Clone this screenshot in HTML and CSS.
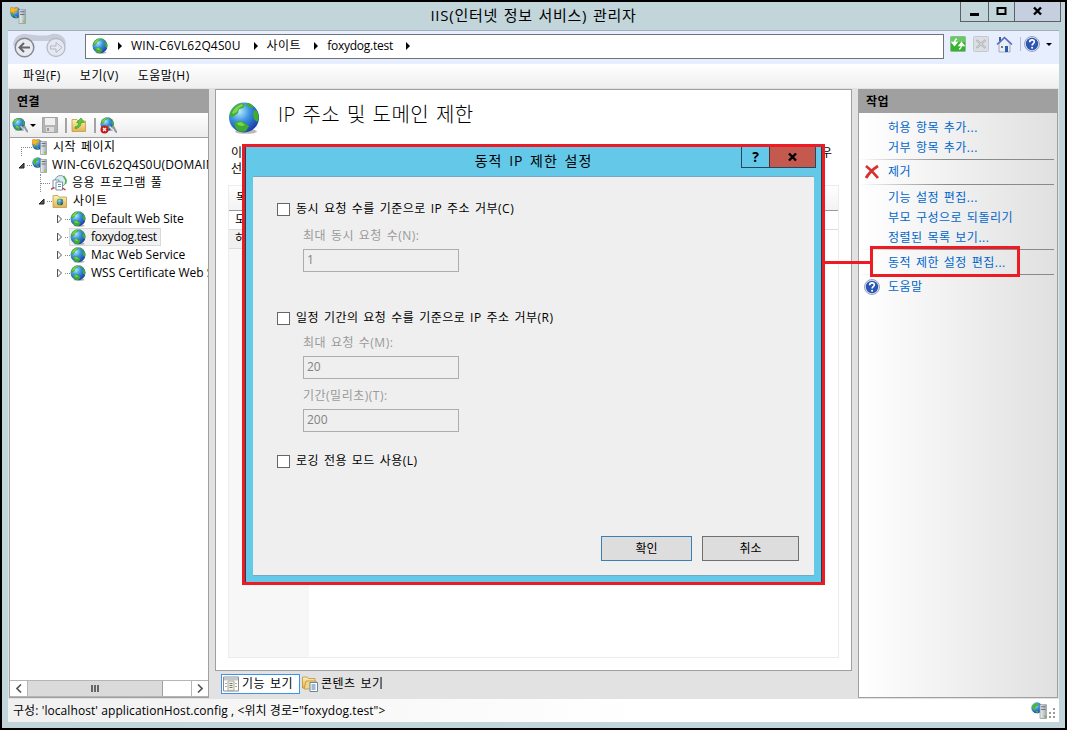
FILE: index.html
```html
<!DOCTYPE html>
<html lang="ko">

<head>
    <meta charset="UTF-8">
    <meta name="viewport" content="width=device-width, initial-scale=1.0">
    <title>IIS(인터넷 정보 서비스) 관리자</title>
    <link rel="stylesheet" href="styles.css">
</head>

<body>
    <!-- Shared icons -->
    <svg class="defs" width="0" height="0">
        <defs>
            <radialGradient id="sea" cx="35%" cy="30%" r="75%">
                <stop offset="0" stop-color="#b5ecfd" />
                <stop offset=".45" stop-color="#3c93e0" />
                <stop offset="1" stop-color="#1a3aa4" />
            </radialGradient>
            <linearGradient id="steel" x1="0" x2="1">
                <stop offset="0" stop-color="#eef2f4" />
                <stop offset="1" stop-color="#a3adb3" />
            </linearGradient>
            <linearGradient id="gold" x1="0" y1="0" x2="0" y2="1">
                <stop offset="0" stop-color="#fdf0b4" />
                <stop offset="1" stop-color="#e2b450" />
            </linearGradient>
            <symbol id="globe" viewBox="0 0 32 32">
                <ellipse cx="18" cy="29.5" rx="11" ry="2.3" fill="#000" opacity=".28" />
                <circle cx="16" cy="15.5" r="15" fill="url(#sea)" />
                <path d="M2 12C4 5 9 2 14 1l3 2-2 3-4 1-1 4-4 3-3 2zM19 1c3 0 5 2 7 4l-3 1-4-2zM26 8l3 1c2 4 2 8 0 11l-3-3-1-5zM7 20l6-1 5 3 3 2-3 5c-4 2-9 0-11-4z" fill="#3fae2f" />
                <path d="M4 11C6 6 10 3 14 2l1 2-4 2-2 4-4 2zM9 21l4-1 4 3-3 1-4-1z" fill="#93dc55" opacity=".8" />
            </symbol>
            <symbol id="server" viewBox="0 0 16 16">
                <circle cx="5.5" cy="5.5" r="5.200" fill="url(#sea)" />
                <path d="M1 4c1-2 3-3 5-3l1 2-3 2v2L2 8zM4 8l3 1-1 2z" fill="#4cb832" />
                <path d="M8.500 2.500h6v13h-6z" fill="url(#steel)" stroke="#8b969c" stroke-width=".7" />
                <path d="M9.500 4.500h4M9.500 7h4" stroke="#505b61" stroke-width=".8" />
                <circle cx="13" cy="13.500" r="1" fill="#83d412" />
            </symbol>
            <symbol id="iis" viewBox="0 0 16 16">
                <use href="#server" />
                <path d="M0 1l2.500-1L4 1.500 7.500.5 7 3.500 4.500 4 4 6.500 2 5 .5 5.500z" fill="#fbb52a" stroke="#d08207" stroke-width=".5" />
            </symbol>
            <symbol id="folder" viewBox="0 0 16 16">
                <path d="M1 2.500h5l1 1.500h7.500v10.500H1z" fill="url(#gold)" stroke="#c29a45" stroke-width=".8" />
            </symbol>
            <symbol id="help" viewBox="0 0 16 16">
                <circle cx="8" cy="8" r="7.500" fill="#dfe5f2" stroke="#8390ae" stroke-width=".8" />
                <circle cx="8" cy="8" r="6.200" fill="#2b56b4" />
                <path d="M5.700 6.300C5.700 3.100 10.500 3.200 10.300 6c-.1 1.600-2.200 1.700-2.200 3.500" fill="none" stroke="#fff" stroke-width="1.700" />
                <circle cx="8.100" cy="11.800" r="1.050" fill="#fff" />
            </symbol>
            <symbol id="connect" viewBox="0 0 16 16">
                <use href="#globe" width="13.500" height="13.500" />
                <path d="M8.500 8.500l3 3M9.500 11.500l3-2.500 2 4 1.500 1.500" fill="none" stroke="#8f9ba2" stroke-width="2" />
                <path d="M9 9l3 3" stroke="#e8eef0" stroke-width="1" />
            </symbol>
        </defs>
    </svg>

    <div class="window">
        <header class="titlebar">
            <svg class="app-icon" width="17" height="17"><use href="#iis" /></svg>
            <h1 class="window-title">IIS(인터넷 정보 서비스) 관리자</h1>
            <div class="window-buttons">
                <span class="win-btn min"><svg width="11" height="11"><path d="M1 7h9v3H1z" /></svg></span>
                <span class="win-btn"><svg width="11" height="11"><path d="M1.500 2h8v6h-8z" fill="none" stroke="#000" stroke-width="2" /></svg></span>
                <span class="win-btn wide"><svg width="11" height="11"><path d="M2 1.500l7 7M9 1.500l-7 7" stroke="#000" stroke-width="2.400" /></svg></span>
            </div>
        </header>

        <div class="client">
            <div class="address-row">
                <svg class="nav-arrows" width="56" height="31" viewBox="0 0 56 31">
                    <path d="M1 14C2 4 7 2 14 2c7 1 20 3 26 0 8-1 14 3 14 11L48 9H10z" fill="#b9bdc8" opacity=".7" />
                    <circle cx="12.500" cy="15.500" r="9.300" fill="#e9ebf0" stroke="#858890" stroke-width="1.500" />
                    <path d="M18 15.500H8M12 11l-4.500 4.500L12 20" fill="none" stroke="#63666d" stroke-width="2" />
                    <circle cx="44" cy="15.500" r="9" fill="#e3e8f2" stroke="#b6bac4" stroke-width="1.300" />
                    <path d="M38.500 14H44v-3.500l6 5-6 5V17h-5.500z" fill="none" stroke="#b3b8c2" stroke-width="1" />
                </svg>
                <div class="address">
                    <svg width="16" height="16"><use href="#globe" /></svg>
                    <i class="crumb-arrow first"></i>
                    <span class="crumb host">WIN-C6VL62Q4S0U</span>
                    <i class="crumb-arrow"></i>
                    <span class="crumb ko">사이트</span>
                    <i class="crumb-arrow"></i>
                    <span class="crumb foxy">foxydog.test</span>
                    <i class="crumb-arrow"></i>
                </div>
                <div class="address-tools">
                    <svg width="16" height="16" viewBox="0 0 16 16">
                        <rect x=".5" y=".5" width="15" height="15" rx="1" fill="#35b52f" stroke="#8fba8b" />
                        <path d="M1 1h14v5H1z" fill="#8bd985" opacity=".6" />
                        <path d="M7 3C5 3.200 4.500 4.500 4.500 8M2 6.500h5L4.500 9.500zM9 13c2-.2 2.500-1.500 2.500-5M9 9.500h5L11.500 6.500z" fill="none" stroke="#fff" stroke-width="1.300" />
                    </svg>
                    <svg width="16" height="16" viewBox="0 0 16 16">
                        <rect x=".5" y=".5" width="15" height="15" rx="1" fill="#dcdee2" stroke="#c5c8cd" />
                        <path d="M3.500 4l9 8M12.500 4l-9 8" stroke="#a9acb1" stroke-width="2" />
                        <path d="M3.500 4l9 8M12.500 4l-9 8" stroke="#e8e9eb" stroke-width=".7" />
                    </svg>
                    <svg width="17" height="17" viewBox="0 0 17 17">
                        <path d="M3 8l5.500-6L14 8v8H3z" fill="#e9edf5" stroke="#8e9cb5" stroke-width=".8" />
                        <path d="M3 1h2v4H3z" fill="#4454a8" />
                        <path d="M1 8.500l7.500-7L16 8.500" fill="none" stroke="#5468c4" stroke-width="1.600" />
                        <path d="M9 10h3v6H9z" fill="#2a5da8" />
                        <path d="M5 10h2v2H5z" fill="#777" />
                    </svg>
                    <i class="tool-sep"></i>
                    <svg width="16" height="16"><use href="#help" /></svg>
                    <i class="drop"></i>
                </div>
            </div>

            <nav class="menubar">
                <span>파일(F)</span>
                <span>보기(V)</span>
                <span>도움말(H)</span>
            </nav>

            <main class="panes">
                <section class="pane connections">
                    <h2 class="pane-title">연결</h2>
                    <div class="toolbar">
                        <svg width="16" height="17"><use href="#connect" /></svg>
                        <i class="drop"></i>
                        <svg class="save" width="16" height="16" viewBox="0 0 16 16">
                            <path d="M.5.5h15v15h-15z" fill="#b4b4b4" stroke="#a4a4a4" />
                            <path d="M3 1h10v7H3z" fill="#efefef" />
                            <path d="M4 10h8v5H4z" fill="#dcdcdc" />
                            <path d="M5 11h2v3H5z" fill="#999" />
                        </svg>
                        <i class="bar-sep"></i>
                        <svg width="16" height="16" viewBox="0 0 16 16">
                            <use href="#folder" />
                            <path d="M4 10c2.500-.5 3.500-2 3.500-4.500H5.500L10 1l3.500 4.500H10c0 4-3 6-6 6z" fill="#5cc83c" stroke="#2d9420" stroke-width=".6" />
                        </svg>
                        <i class="bar-sep"></i>
                        <svg width="17" height="17" viewBox="0 0 17 17">
                            <use href="#connect" width="17" height="17" />
                            <circle cx="4.500" cy="12.500" r="4" fill="#c91a1a" />
                            <path d="M3 11l3 3M6 11l-3 3" stroke="#fff" stroke-width="1.200" />
                        </svg>
                    </div>
                    <ul class="tree">
                        <li class="node start"><i class="dots"></i><svg width="16" height="16"><use href="#iis" /></svg><span class="ko">시작 페이지</span></li>
                        <li class="node root"><svg class="twist" width="7" height="7"><path d="M6 1v5H1z" fill="#555" stroke="#222" /></svg><i class="dots"></i><svg width="16" height="16"><use href="#server" /></svg><span class="host">WIN-C6VL62Q4S0U(DOMAIN</span></li>
                        <li class="node pools"><i class="dots"></i><svg width="16" height="16" viewBox="0 0 16 16">
                                <circle cx="9.500" cy="6" r="5.500" fill="#d8ebf5" stroke="#6fa0bd" />
                                <path d="M12.500 1l2.500 4-.5 4" fill="none" stroke="#58b04a" stroke-width="1.600" />
                                <path d="M2 5h6v8H2z" fill="#fff" stroke="#7b94a5" />
                                <path d="M5 7h6.500v8H5z" fill="#fff" stroke="#7b94a5" />
                                <path d="M7 9.500h3M7 11.500h3" stroke="#7b94a5" />
                                <path d="M0 14.500l3-2M14.500 15l-3-2" stroke="#cf3030" stroke-width="1.500" />
                            </svg><span class="ko">응용 프로그램 풀</span></li>
                        <li class="node sites"><svg class="twist" width="7" height="7"><path d="M6 1v5H1z" fill="#555" stroke="#222" /></svg><i class="dots"></i><svg width="16" height="16" viewBox="0 0 16 16"><use href="#folder" /><use href="#globe" x="4.500" y="5.500" width="7" height="7" /></svg><span class="ko">사이트</span></li>
                        <li class="node site"><svg class="twist" width="7" height="10"><path d="M1.500 1v8l4-4z" fill="#fff" stroke="#555" /></svg><i class="dots"></i><svg width="16" height="16"><use href="#globe" /></svg><span>Default Web Site</span></li>
                        <li class="node site"><svg class="twist" width="7" height="10"><path d="M1.500 1v8l4-4z" fill="#fff" stroke="#555" /></svg><i class="dots"></i><div class="selected"><svg width="16" height="16"><use href="#globe" /></svg><span class="foxy">foxydog.test</span></div></li>
                        <li class="node site"><svg class="twist" width="7" height="10"><path d="M1.500 1v8l4-4z" fill="#fff" stroke="#555" /></svg><i class="dots"></i><svg width="16" height="16"><use href="#globe" /></svg><span>Mac Web Service</span></li>
                        <li class="node site"><svg class="twist" width="7" height="10"><path d="M1.500 1v8l4-4z" fill="#fff" stroke="#555" /></svg><i class="dots"></i><svg width="16" height="16"><use href="#globe" /></svg><span>WSS Certificate Web S</span></li>
                    </ul>
                    <div class="scrollbar">
                        <span class="scroll-btn"><svg width="6" height="9"><path d="M5 .5l-4 4 4 4" fill="none" stroke="#555" stroke-width="1.600" /></svg></span>
                        <span class="thumb"><i></i><i></i><i></i></span>
                        <span class="scroll-btn end"><svg width="6" height="9"><path d="M1 .5l4 4-4 4" fill="none" stroke="#555" stroke-width="1.600" /></svg></span>
                    </div>
                </section>

                <section class="center">
                    <div class="feature">
                        <div class="feature-head">
                            <svg width="32" height="32"><use href="#globe" /></svg>
                            <h2>IP 주소 및 도메인 제한</h2>
                        </div>
                        <div class="feature-text">
                            <p><span>이</span><span>우</span></p>
                            <p><span>선</span></p>
                        </div>
                        <div class="grid">
                            <div class="grid-head">목</div>
                            <div class="grid-group">모</div>
                            <div class="grid-row">허</div>
                            <div class="grid-fill"></div>
                        </div>
                    </div>
                    <div class="view-tabs ko">
                        <span class="tab active">
                            <svg width="16" height="16" viewBox="0 0 16 16">
                                <path d="M.5 1h15v14H.5z" fill="#fff" stroke="#8a8a8a" />
                                <path d="M1 1.500h14v3H1z" fill="#c3c7ca" />
                                <path d="M5 5h6v9.500H5z" fill="#f4f1dc" stroke="#aaa" />
                                <path d="M2 7.500h2M2 10.500h2M12 7.500h2M12 10.500h2" stroke="#aaa" />
                                <path d="M6.500 7.500h3M6.500 9.500h3M6.500 11.500h3" stroke="#6f7c72" />
                            </svg>
                            기능 보기
                        </span>
                        <span class="tab">
                            <svg width="16" height="16" viewBox="0 0 16 16">
                                <path d="M.5 1h5l1 1.500H13V12H.5z" fill="url(#gold)" stroke="#b99244" stroke-width=".8" />
                                <path d="M4 5h10v8H2z" fill="#f3d482" stroke="#b99244" stroke-width=".8" />
                                <path d="M8 6.500h7.500v9H8z" fill="#fff" stroke="#6c8399" />
                                <path d="M9.500 9h4M9.500 11h4M9.500 13h4" stroke="#456fa5" />
                            </svg>
                            콘텐츠 보기
                        </span>
                    </div>
                </section>

                <section class="pane actions">
                    <h2 class="pane-title">작업</h2>
                    <ul class="action-list ko">
                        <li>허용 항목 추가...</li>
                        <li>거부 항목 추가...</li>
                        <li class="rule"></li>
                        <li class="with-icon"><svg width="16" height="16" viewBox="0 0 16 16"><path d="M2 2c4 3 8 7 12 12M14 2C9 5 5 9 2 14" fill="none" stroke="#d8302f" stroke-width="2.800" /></svg>제거</li>
                        <li class="rule"></li>
                        <li>기능 설정 편집...</li>
                        <li>부모 구성으로 되돌리기</li>
                        <li>정렬된 목록 보기...</li>
                        <li class="rule"></li>
                        <li>동적 제한 설정 편집...</li>
                        <li class="rule"></li>
                        <li class="with-icon"><svg width="16" height="16"><use href="#help" /></svg>도움말</li>
                    </ul>
                </section>
            </main>

            <footer class="statusbar">
                <span>구성: 'localhost' applicationHost.config , &lt;위치 경로="foxydog.test"&gt;</span>
                <svg width="28" height="18" viewBox="0 0 28 18">
                    <use href="#server" x="1" width="17" height="17" />
                    <path d="M23 6h2v2h-2zM19 10h2v2h-2zM23 10h2v2h-2zM15 14h2v2h-2zM19 14h2v2h-2zM23 14h2v2h-2z" fill="#9a9a9a" />
                </svg>
            </footer>
        </div>
    </div>

    <!-- Dialog on top of the manager window -->
    <div class="dialog">
        <div class="dialog-bar">
            <h2>동적 IP 제한 설정</h2>
            <div class="dialog-buttons">
                <span class="dlg-help">?</span>
                <span class="dlg-close"><svg width="11" height="11"><path d="M2 1.500l7 7M9 1.500l-7 7" stroke="#000" stroke-width="2.400" /></svg></span>
            </div>
        </div>
        <form class="dialog-body ko">
            <label class="check"><input type="checkbox"><span>동시 요청 수를 기준으로 IP 주소 거부(C)</span></label>
            <label class="field concurrent">최대 동시 요청 수(N):<input type="text" value="1" disabled></label>
            <label class="check"><input type="checkbox"><span>일정 기간의 요청 수를 기준으로 IP 주소 거부(R)</span></label>
            <label class="field requests">최대 요청 수(M):<input type="text" value="20" disabled></label>
            <label class="field period">기간(밀리초)(T):<input type="text" value="200" disabled></label>
            <label class="check"><input type="checkbox"><span>로깅 전용 모드 사용(L)</span></label>
            <div class="dialog-actions">
                <button type="button" class="ok">확인</button>
                <button type="button" class="cancel">취소</button>
            </div>
        </form>
    </div>
    <div class="callout-line"></div>
    <div class="callout"></div>
</body>

</html>
```
FILE: styles.css
```css
* {
    box-sizing: border-box;
}

body {
    margin: 0;
    width: 1067px;
    height: 730px;
    overflow: hidden;
    font-family: "Open Sans", "Noto Sans CJK KR", sans-serif;
    font-size: 12px;
    line-height: 18px;
    color: #000;
    position: relative;
}

h1,
h2,
p,
ul {
    margin: 0;
    padding: 0;
    font-weight: normal;
    list-style: none;
}

svg {
    display: block;
    flex: none;
}

.defs {
    position: absolute;
}

/* Korean labels are set a little wider */
.ko {
    letter-spacing: 0.5px;
    word-spacing: 1.2px;
}

.host {
    letter-spacing: 0.15px;
}

.foxy {
    letter-spacing: -0.25px;
}

.window {
    display: flex;
    flex-direction: column;
    width: 1067px;
    height: 730px;
    border: 2px solid #000;
    padding: 0 6px 6px;
    background: #c2d5db;
}

/* Title bar */
.titlebar {
    display: flex;
    height: 28px;
    flex: none;
}

.app-icon {
    margin: 5px 0 0 2px;
}

.window-title {
    flex: 1;
    padding-left: 80px;
    text-align: center;
    font-size: 15px;
    line-height: 27px;
    letter-spacing: 0.75px;
    word-spacing: 1px;
}

.window-buttons {
    display: flex;
    height: 20px;
    margin-right: -2px;
    border: 1px solid #596067;
    border-top: 0;
}

.win-btn {
    display: flex;
    justify-content: center;
    align-items: center;
    width: 26px;
    border-right: 1px solid #596067;
}

.win-btn.min {
    width: 28px;
}

.win-btn.wide {
    width: 45px;
    border-right: 0;
    background: #c5cfdf;
}

.client {
    display: flex;
    flex-direction: column;
    flex: 1;
    min-height: 0;
    background: #e2e2e2;
}

/* Address */
.address-row {
    display: flex;
    height: 34px;
    flex: none;
    border-top: 1px solid #a2adb9;
    background: #e7eefd;
}

.nav-arrows {
    margin: 1px 0 0 4px;
}

.address {
    display: flex;
    align-items: center;
    width: 859px;
    height: 25px;
    margin: 3px 0 0 17px;
    padding: 0 0 2px 6px;
    border: 1px solid #6f737a;
    background: #fff;
}

.crumb {
    margin-right: 13px;
    white-space: nowrap;
}

.crumb-arrow {
    width: 0;
    height: 0;
    margin-right: 9px;
    border: 4px solid transparent;
    border-left: 4px solid #000;
    border-right: 0;
}

.crumb-arrow.first {
    margin-left: 10px;
}

.address-tools {
    display: flex;
    align-items: center;
    gap: 7px;
    height: 26px;
    padding-left: 6px;
}

.tool-sep {
    width: 1px;
    height: 14px;
    margin-right: -4px;
    background: #b8bfcc;
}

.drop {
    width: 0;
    height: 0;
    border: 3px solid transparent;
    border-top-color: #000;
    border-bottom: 0;
}

.address-tools .drop {
    margin-left: -1px;
}

/* Menu */
.menubar {
    display: flex;
    height: 24px;
    flex: none;
    gap: 19px;
    padding: 3px 0 0 15px;
    background: linear-gradient(#fff, #efefef);
    letter-spacing: 0.5px;
}

.panes {
    display: flex;
    flex: 1;
    min-height: 0;
    padding: 1px;
}

.pane {
    display: flex;
    flex-direction: column;
    width: 200px;
    height: 609px;
    border: 1px solid #a0a0a0;
    background: #fff;
}

.pane-title {
    flex: none;
    height: 23px;
    padding-left: 7px;
    background: #a0a0a0;
    font-size: 12px;
    line-height: 23px;
    font-weight: bold;
    letter-spacing: 0.5px;
}

.toolbar {
    display: flex;
    align-items: center;
    flex: none;
    height: 25px;
    padding-left: 2px;
    border-bottom: 1px solid #a0a0a0;
    background: linear-gradient(#fff, #ececec);
}

.toolbar .drop {
    margin-left: 2px;
}

.save {
    margin-left: 6px;
}

.bar-sep {
    width: 2px;
    height: 15px;
    margin: 0 4px 0 7px;
    background: #a4a4a4;
}

/* Tree */
.tree {
    flex: 1;
    overflow: hidden;
}

.node {
    display: flex;
    align-items: center;
    height: 18px;
    white-space: nowrap;
}

.node span {
    margin-left: 5px;
}

.dots {
    flex: none;
    height: 1px;
    width: 5px;
    border-top: 1px dotted #888;
}

.twist {
    margin-right: 2px;
}

.start {
    padding-left: 11px;
}

.start .dots {
    width: 11px;
    height: 9px;
    margin-top: 8px;
    border-left: 1px dotted #888;
}

.root {
    padding-left: 8px;
}

.node.root span {
    margin-left: 4px;
}

.pools {
    padding-left: 30px;
}

.pools .dots {
    width: 11px;
    height: 18px;
    border-top: 0;
    border-left: 1px dotted #888;
    background: repeating-linear-gradient(90deg, #888 0 1px, transparent 1px 2px) 0 50% / 100% 1px no-repeat;
}

.sites {
    padding-left: 28px;
}

.site {
    padding-left: 46px;
}

.site .foxy {
    margin-left: 5px;
}

.selected {
    display: flex;
    align-items: center;
    height: 18px;
    margin-left: -1px;
    padding-right: 3px;
    border: 1px solid #d9d9d9;
    background: #f1f1f1;
}

.scrollbar {
    display: flex;
    flex: none;
    height: 17px;
    border-top: 1px solid #b5b5b5;
    border-bottom: 1px solid #b5b5b5;
}

.scroll-btn {
    display: flex;
    align-items: center;
    justify-content: center;
    width: 18px;
    border-right: 1px solid #b5b5b5;
}

.scroll-btn.end {
    width: 17px;
    margin-left: auto;
    border-left: 1px solid #b5b5b5;
    border-right: 0;
}

.thumb {
    display: flex;
    align-items: center;
    justify-content: center;
    gap: 1px;
    width: 135px;
    border-right: 1px solid #a0a0a0;
    background: #dadada;
}

.thumb i {
    width: 2px;
    height: 7px;
    background: #666;
}

/* Center */
.center {
    width: 637px;
    margin: 0 6px;
}

.feature {
    display: flex;
    flex-direction: column;
    height: 582px;
    padding: 12px 12px;
    border: 1px solid #a0a0a0;
    background: #fff;
}

.feature-head {
    display: flex;
    height: 42px;
    gap: 18px;
}

.feature-head h2 {
    font-size: 20px;
    font-weight: 300;
    line-height: 25px;
    letter-spacing: 0.4px;
    word-spacing: 1.3px;
}

.feature-text {
    height: 41px;
    padding: 1px 7px 0 3px;
    line-height: 16px;
}

.feature-text p {
    display: flex;
    justify-content: space-between;
}

.grid {
    display: flex;
    flex-direction: column;
    flex: 1;
    border: 1px solid #ececec;
}

.grid-head {
    height: 25px;
    padding-left: 7px;
    border-bottom: 1px solid #9a9a9a;
    background: linear-gradient(#fff, #f3f3f3);
    line-height: 23px;
}

.grid-group,
.grid-row {
    height: 19px;
    padding-left: 6px;
    border-bottom: 1px solid #dcdcdc;
}

.grid-row {
    width: 80px;
    background: #f0f0f0;
}

.grid-fill {
    flex: 1;
    width: 80px;
    background: #f7f7f7;
}

.view-tabs {
    display: flex;
    padding: 3px 0 0 6px;
}

.tab {
    display: flex;
    align-items: center;
    gap: 3px;
    height: 20px;
    padding: 0 1px;
    border: 1px solid transparent;
    white-space: nowrap;
}

.tab.active {
    width: 79px;
    border-color: #3a93f0;
    background: #fff;
}

/* Actions */
.actions {
    background: linear-gradient(90deg, #fff, #e0e0e0);
}

.action-list {
    padding: 4px 3px 0 0;
    color: #0066cc;
}

.action-list li {
    height: 20px;
    padding-left: 29px;
    line-height: 22px;
    white-space: nowrap;
}

.action-list .rule {
    height: 1px;
    margin: 2px 0;
    background: linear-gradient(90deg, transparent, #8a8a8a 45%, #8a8a8a);
}

.action-list .with-icon {
    display: flex;
    align-items: center;
    gap: 8px;
    padding-left: 5px;
}

.statusbar {
    display: flex;
    justify-content: space-between;
    flex: none;
    height: 23px;
    padding: 3px 1px 0 5px;
    background: linear-gradient(90deg, #f0f0f0, #fff 60%);
    letter-spacing: 0.08px;
}

/* Dialog */
.dialog {
    position: absolute;
    left: 242px;
    top: 144px;
    width: 583px;
    height: 441px;
    border: 3px solid #ed1c24;
    background: #64c8e8;
    box-shadow: inset 1px 0 #273f4c, inset -1px 0 #273f4c;
    padding: 0 8px;
}

.dialog-bar {
    display: flex;
    height: 29px;
}

.dialog-bar h2 {
    flex: 1;
    padding-left: 73px;
    text-align: center;
    font-size: 14px;
    line-height: 27px;
    letter-spacing: 1px;
    word-spacing: 2px;
}

.dialog-buttons {
    display: flex;
    height: 21px;
    margin-right: -2px;
    border: 1px solid #27485a;
    border-top: 0;
}

.dlg-help {
    width: 27px;
    text-align: center;
    font-size: 14px;
    font-weight: bold;
    line-height: 20px;
}

.dlg-close {
    display: flex;
    align-items: center;
    justify-content: center;
    width: 46px;
    border-left: 1px solid #5a2a2a;
    background: #c4594f;
}

.dialog-body {
    display: flex;
    flex-direction: column;
    height: 400px;
    padding: 23px 15px 0 24px;
    border-top: 1px solid #74a9bf;
    border-bottom: 1px solid #74a9bf;
    background: #efefef;
}

.check {
    display: flex;
    align-items: center;
    height: 18px;
    gap: 6px;
}

.check input {
    appearance: none;
    width: 13px;
    height: 13px;
    margin: 0;
    border: 1px solid #666;
    background: #fff;
}

.field {
    display: flex;
    flex-direction: column;
    gap: 4px;
    margin: 8px 0 0 26px;
    color: #9a9a9a;
}

.field input {
    width: 156px;
    height: 23px;
    padding: 0 3px 2px;
    border: 1px solid #abadaf;
    background: #efefef;
    color: #838383;
    font: inherit;
}

.concurrent {
    margin-top: 9px;
    margin-bottom: 37px;
}

.requests {
    margin-top: 7px;
}

.period {
    margin-bottom: 20px;
}

.dialog-actions {
    display: flex;
    justify-content: flex-end;
    gap: 10px;
    margin: auto 0 14px;
}

.dialog-actions button {
    height: 25px;
    padding: 0;
    border: 1px solid #707070;
    background: #dddddd;
    color: #000;
    font: inherit;
}

.dialog-actions .ok {
    width: 91px;
    border-color: #3c7fb1;
}

.dialog-actions .cancel {
    width: 97px;
}

/* Red marker around the matching action */
.callout {
    position: absolute;
    left: 870px;
    top: 246px;
    width: 150px;
    height: 31px;
    border: 3px solid #ed1c24;
}

.callout-line {
    position: absolute;
    left: 825px;
    top: 261px;
    width: 45px;
    height: 3px;
    background: #ed1c24;
}
```
